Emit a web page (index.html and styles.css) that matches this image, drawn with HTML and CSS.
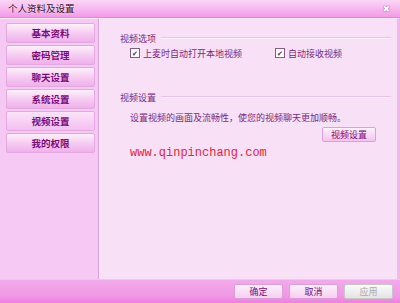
FILE: index.html
```html
<!DOCTYPE html>
<html lang="zh-CN">
<head>
    <meta charset="UTF-8">
    <title>个人资料及设置</title>
    <link rel="stylesheet" href="styles.css">
</head>
<body>
    <div class="window">
        <div class="titlebar">
            <span class="title">个人资料及设置</span>
            <span class="close">&#x2716;</span>
        </div>
        <div class="main">
            <div class="sidebar">
                <div class="nav-btn">基本资料</div>
                <div class="nav-btn">密码管理</div>
                <div class="nav-btn">聊天设置</div>
                <div class="nav-btn">系统设置</div>
                <div class="nav-btn active">视频设置</div>
                <div class="nav-btn">我的权限</div>
            </div>
            <div class="content">
                <div class="group-title"><span>视频选项</span><i></i></div>
                <div class="checks">
                    <label class="check"><span class="box">&#x2714;</span>上麦时自动打开本地视频</label>
                    <label class="check"><span class="box">&#x2714;</span>自动接收视频</label>
                </div>
                <div class="group-title second"><span>视频设置</span><i></i></div>
                <div class="desc">设置视频的画面及流畅性，使您的视频聊天更加顺畅。</div>
                <div class="row-right"><button class="btn small">视频设置</button></div>
                <div class="watermark">www.qinpinchang.com</div>
            </div>
        </div>
        <div class="footer">
            <button class="btn">确定</button>
            <button class="btn">取消</button>
            <button class="btn disabled">应用</button>
        </div>
    </div>
</body>
</html>
```

FILE: styles.css
```css
body {
    margin: 0;
    font-family: "Noto Sans CJK SC", "DejaVu Sans", sans-serif;
    font-size: 9px;
    color: #7a2a7a;
}
.window {
    width: 400px;
    height: 303px;
    display: flex;
    flex-direction: column;
    background: #f8e1f6;
    overflow: hidden;
}
.titlebar {
    height: 17px;
    flex: none;
    display: flex;
    align-items: center;
    justify-content: space-between;
    padding: 0 10px 0 8px;
    background: linear-gradient(#fbd6f5, #f7b6ee 55%, #f29ae6);
    border-bottom: 1px solid #e684da;
}
.title {
    color: #2e0a2c;
    font-size: 9.5px;
    line-height: 17px;
    text-shadow: 0 0 2px #fff;
}
.close {
    color: #fff;
    font-size: 9px;
    text-shadow: 0 0 1px #a04898, 0 0 1px #a04898;
}
.main {
    flex: 1;
    display: flex;
    border-top: 1px solid #fbe6f8;
    border-right: 3px solid #f2b8ec;
}
.sidebar {
    flex: none;
    width: 99px;
    background: #f6c9f4;
    border-right: 1px solid #dca0d8;
    padding: 4px 3px 0 6px;
    box-sizing: border-box;
    display: flex;
    flex-direction: column;
    gap: 2px;
}
.nav-btn {
    height: 18px;
    border: 1px solid #e4a8e0;
    border-radius: 2px;
    background: linear-gradient(#fdf0fb, #f6cdf2 50%, #f0b0ec);
    color: #7c0a78;
    font-weight: bold;
    text-align: center;
    line-height: 18px;
    font-size: 9.5px;
}
.nav-btn.active {
    background: linear-gradient(#fbe4f8, #f3bff0);
}
.content {
    flex: 1;
    min-width: 0;
    padding: 13px 6px 0 20px;
    border-left: 1px solid #fbeefa;
}
.group-title {
    display: flex;
    align-items: center;
    gap: 5px;
    height: 12px;
}
.group-title i {
    flex: 1;
    height: 1px;
    background: #e9c2e6;
    border-bottom: 1px solid #fff4fd;
}
.group-title.second {
    margin-top: 32px;
}
.checks {
    display: flex;
    margin-top: 3px;
    padding-left: 10px;
    height: 12px;
}
.check {
    display: flex;
    align-items: center;
    gap: 3px;
    flex: none;
}
.check:first-child {
    width: 145px;
}
.box {
    width: 8px;
    height: 8px;
    border: 1px solid #8b5a8b;
    background: #fff;
    font-size: 7px;
    line-height: 8px;
    text-align: center;
    color: #5a1a5a;
}
.desc {
    margin-top: 9px;
    padding-left: 10px;
    height: 12px;
    line-height: 12px;
}
.row-right {
    display: flex;
    justify-content: flex-end;
    padding-right: 15px;
    margin-top: 3px;
}
.btn {
    font-family: "Noto Sans CJK SC", sans-serif;
    font-size: 9px;
    color: #7c0a78;
    height: 15px;
    width: 49px;
    padding: 0;
    line-height: 13px;
    border: 1px solid #dca0d8;
    border-radius: 2px;
    background: linear-gradient(#fdf2fb, #f3c4ef);
}
.btn.small {
    width: 54px;
}
.watermark {
    margin-top: 3px;
    padding-left: 10px;
    color: #ef2040;
    font-family: "Liberation Mono", monospace;
    font-size: 12px;
    line-height: 16px;
}
.footer {
    height: 23px;
    flex: none;
    display: flex;
    align-items: center;
    justify-content: flex-end;
    gap: 6px;
    padding-right: 7px;
    background: linear-gradient(#f2aaea, #f098e4 70%, #f07ee2);
    border-top: 1px solid #f6c2f0;
}
.footer .btn {
    height: 15px;
    width: 49px;
    background: linear-gradient(#fdf0fb, #f6cff2);
}
.footer .btn.disabled {
    color: #a8a8a8;
    border-color: #c8c8c8;
    background: linear-gradient(#fafafa, #e4e4e4);
}
```
